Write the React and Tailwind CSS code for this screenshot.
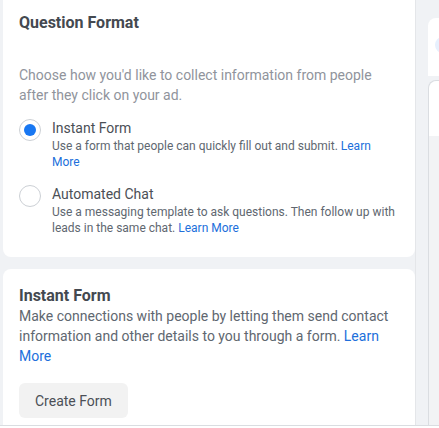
export default function App() {
  return (
    <div
      className="w-[439px] h-[428px] overflow-hidden bg-white flex flex-col"
      style={{ fontFamily: 'Roboto, "Noto Sans", Arial, sans-serif' }}
    >
      <div className="flex-1 flex min-h-0 bg-[#f0f2f5]">
        {/* Main column */}
        <div className="w-[415px] shrink-0 pl-[3px] flex flex-col gap-3 min-h-0">
          {/* Question Format card */}
          <section className="bg-white rounded-b-lg px-4 pt-[13px] pb-[21px]">
            <h2 className="text-base leading-5 font-bold text-[#444950]">Question Format</h2>
            <p className="mt-8 text-sm leading-5 text-[#90949c]">
              Choose how you'd like to collect information from people after they click on your ad.
            </p>

            <div className="mt-[13px] flex flex-col gap-[14px]">
              <label className="flex gap-[11px]">
                <span className="mt-[1px] w-[22px] h-[22px] shrink-0 rounded-full border border-[#ccd0d5] flex items-center justify-center">
                  <span className="w-3 h-3 rounded-full bg-[#1877f2]" />
                </span>
                <span>
                  <span className="block text-sm leading-5 text-[#4b4f56]">Instant Form</span>
                  <span className="block text-xs leading-4 text-[#606770]">
                    Use a form that people can quickly fill out and submit.{' '}
                    <a className="text-[#216fdb]">Learn More</a>
                  </span>
                </span>
              </label>

              <label className="flex gap-[11px]">
                <span className="mt-[1px] w-[22px] h-[22px] shrink-0 rounded-full border border-[#ccd0d5]" />
                <span>
                  <span className="block text-sm leading-5 text-[#4b4f56]">Automated Chat</span>
                  <span className="block text-xs leading-4 text-[#606770]">
                    Use a messaging template to ask questions. Then follow up with leads in the same chat.{' '}
                    <a className="text-[#216fdb]">Learn More</a>
                  </span>
                </span>
              </label>
            </div>
          </section>

          {/* Instant Form card */}
          <section className="flex-1 bg-white rounded-t-lg px-4 pt-[17px]">
            <h2 className="text-base leading-5 font-bold text-[#444950]">Instant Form</h2>
            <p className="text-sm leading-5 text-[#606770]">
              Make connections with people by letting them send contact information and other details to
              you through a form. <a className="text-[#216fdb]">Learn More</a>
            </p>
            <button className="mt-[17px] h-[35px] px-4 rounded-md bg-[#f2f2f2] text-sm text-[#4b4f56]">
              Create Form
            </button>
          </section>
        </div>

        {/* Right strip, cut off */}
        <div className="flex-1 pl-3 pt-[18px] flex flex-col gap-1 border-l border-[#e4e6e9]">
          <div className="h-[58px] bg-white rounded-tl-lg pl-[7px] pt-[19px]">
            <div className="w-4 h-4 rounded-full bg-[#e7f0fd]" />
          </div>
          <div className="flex-1 rounded-tl-lg border-l border-t border-[#dadde1] flex flex-col">
            <div className="h-[55px] bg-white rounded-tl-lg" />
            <div className="flex-1 bg-[#f2f3f5]" />
          </div>
        </div>
      </div>
      <div className="h-[3px] shrink-0 border-t border-[#dadde1] bg-white" />
    </div>
  );
}
